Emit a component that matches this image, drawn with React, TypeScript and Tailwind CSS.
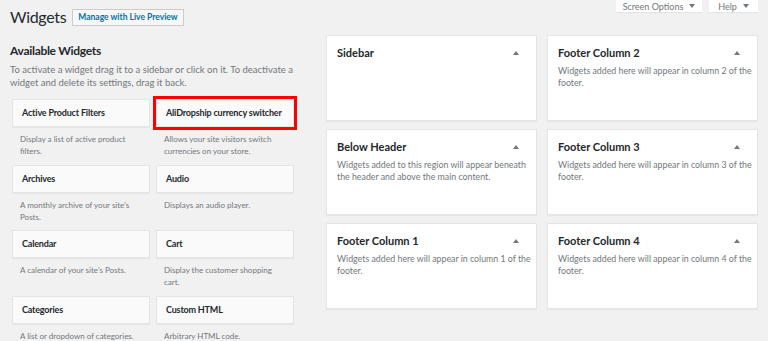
import React from 'react'

const font = { fontFamily: 'Lato, "Open Sans", sans-serif' }

const widgets = [
  { name: 'Active Product Filters', desc: 'Display a list of active product filters.' },
  { name: 'AliDropship currency switcher', desc: 'Allows your site visitors switch currencies on your store.', marked: true },
  { name: 'Archives', desc: "A monthly archive of your site's Posts." },
  { name: 'Audio', desc: 'Displays an audio player.' },
  { name: 'Calendar', desc: "A calendar of your site's Posts." },
  { name: 'Cart', desc: 'Display the customer shopping cart.' },
  { name: 'Categories', desc: 'A list or dropdown of categories.' },
  { name: 'Custom HTML', desc: 'Arbitrary HTML code.' }
]

const areas = [
  { name: 'Sidebar', desc: '' },
  { name: 'Footer Column 2', desc: 'Widgets added here will appear in column 2 of the footer.' },
  { name: 'Below Header', desc: 'Widgets added to this region will appear beneath the header and above the main content.' },
  { name: 'Footer Column 3', desc: 'Widgets added here will appear in column 3 of the footer.' },
  { name: 'Footer Column 1', desc: 'Widgets added here will appear in column 1 of the footer.' },
  { name: 'Footer Column 4', desc: 'Widgets added here will appear in column 4 of the footer.' }
]

const Caret = ({ up = false }: { up?: boolean }) => (
  <svg width="6" height="4" viewBox="0 0 6 4" className="shrink-0">
    <path d={up ? 'M0 4 L3 0 L6 4 Z' : 'M0 0 L6 0 L3 4 Z'} fill="currentColor" />
  </svg>
)

const App: React.FC = () => {
  return (
    <div className="h-[341px] w-[768px] overflow-hidden bg-[#f1f1f1] text-[#23282d]" style={font}>
      <div className="flex h-[30px] justify-between px-[10px]">
        <div className="flex items-center gap-[6px] self-start pt-[7px]">
          <h1 className="text-[16px] leading-[20px] font-normal tracking-[-0.02em] text-[#23282d]">Widgets</h1>
          <button className="h-[17px] border border-[#ccc] bg-[#f7f7f7] px-[5px] text-[8.5px] font-bold leading-[15px] text-[#0073aa]">
            Manage with Live Preview
          </button>
        </div>
        <div className="flex items-start gap-[7px]">
          <div className="flex h-[12px] w-[86px] items-center justify-center gap-[6px] bg-white text-[9px] leading-[11px] text-[#72777c] shadow-[0_1px_1px_rgba(0,0,0,0.05)]">
            Screen Options <Caret />
          </div>
          <div className="flex h-[12px] w-[49px] items-center justify-center gap-[6px] bg-white text-[9px] leading-[11px] text-[#72777c] shadow-[0_1px_1px_rgba(0,0,0,0.05)]">
            Help <Caret />
          </div>
        </div>
      </div>

      <div className="flex items-start gap-[32px] pl-[10px] pt-[5px]">
        <div className="w-[284px] pt-[8px]">
          <h2 className="text-[12px] leading-[16px] font-bold tracking-[-0.025em]">Available Widgets</h2>
          <p className="mt-[4px] text-[9.5px] leading-[13px] text-[#72777c]">
            To activate a widget drag it to a sidebar or click on it. To deactivate a widget and delete its settings, drag it back.
          </p>
          <div className="mt-[10px] ml-[2px] grid grid-cols-[138px_138px] gap-x-[6px]">
            {widgets.map(w => (
              <div key={w.name} className="h-[65.6px]">
                <div
                  className={
                    'flex h-[28px] items-center border border-[#e5e5e5] bg-[#fafafa] px-[9px] text-[9px] font-bold tracking-[-0.02em] shadow-[0_1px_1px_rgba(0,0,0,0.04)]' +
                    (w.marked ? ' outline-3 outline-[#ff0000]' : '')
                  }
                >
                  {w.name}
                </div>
                <p className="mt-[6px] px-[8px] text-[8px] leading-[12px] text-[#72777c]">{w.desc}</p>
              </div>
            ))}
          </div>
        </div>

        <div className="grid grid-cols-[211px_211px] gap-x-[10px] gap-y-[8px]">
          {areas.map(a => (
            <div key={a.name} className="h-[86px] border border-[#e5e5e5] bg-white pt-[9px] pr-[5px] pl-[10px] shadow-[0_1px_1px_rgba(0,0,0,0.04)]">
              <div className="flex items-center justify-between pr-[12px]">
                <span className="text-[11px] leading-[15px] font-bold">{a.name}</span>
                <span className="text-[#72777c]">
                  <Caret up />
                </span>
              </div>
              {a.desc && <p className="mt-[5px] text-[8.8px] leading-[12px] text-[#72777c]">{a.desc}</p>}
            </div>
          ))}
        </div>
      </div>
    </div>
  )
}

export default App
